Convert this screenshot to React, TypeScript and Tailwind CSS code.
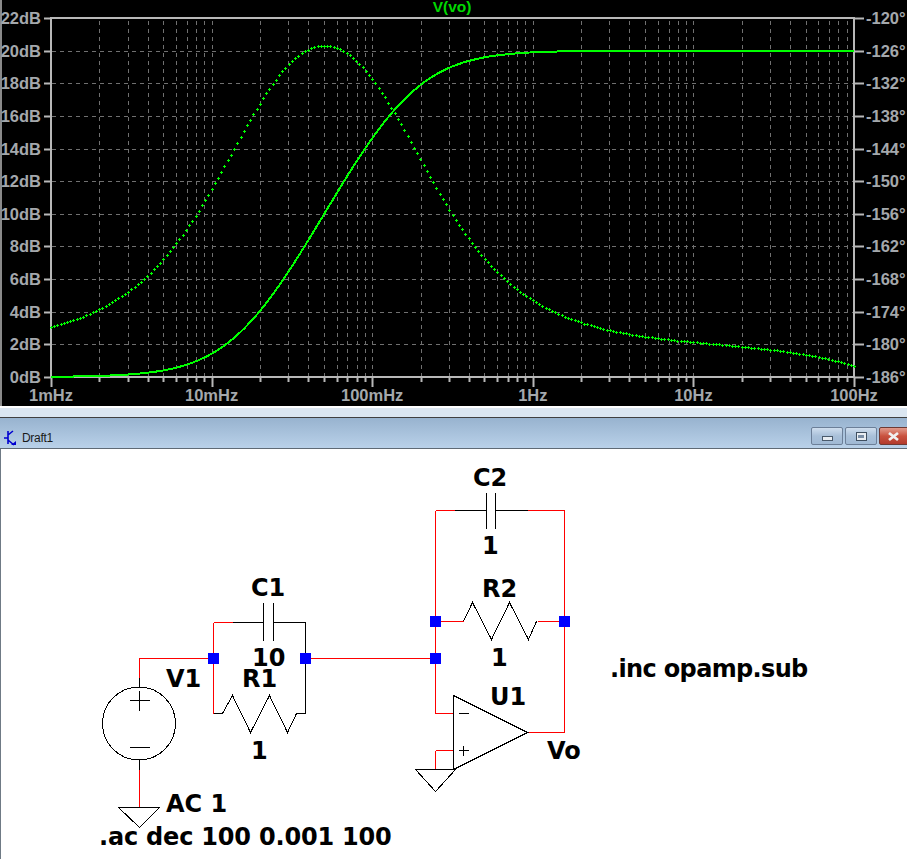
const X0 = 51;
const DEC = 160.6;
const Y0 = 377;
const DB = 16.32;
const DEG = 5.44;

const fx = (f: number) => X0 + (Math.log10(f) + 3) * DEC;

function curves() {
  const mag: string[] = [];
  let dots = "";
  for (let i = 0; i <= 500; i++) {
    const f = Math.pow(10, -3 + i / 100);
    const w = 2 * Math.PI * f;
    const m = 10 * Math.log10((1 + 100 * w * w) / (1 + w * w));
    const p = Math.atan(10 * w) - Math.atan(w) - Math.atan(f / 1400);
    const x = fx(f);
    mag.push(`${x.toFixed(1)},${(Y0 - m * DB).toFixed(1)}`);
    if (i % 2 === 0) {
      const deg = (p * 180) / Math.PI + 6;
      const yy = Math.round(Y0 - deg * DEG);
      const xx = Math.round(x);
      dots += `M${xx - 1} ${yy + 0.5}h3M${xx + 0.5} ${yy - 1}v3`;
    }
  }
  return { mag: mag.join(" "), dots };
}

function Plot() {
  const { mag, dots } = curves();
  const dbs = [0, 2, 4, 6, 8, 10, 12, 14, 16, 18, 20, 22];
  const decs = [0, 1, 2, 3, 4, 5];
  const fLabels = ["1mHz", "10mHz", "100mHz", "1Hz", "10Hz", "100Hz"];
  const vLines: { x: number; major: boolean }[] = [];
  for (let d = 0; d < 5; d++) {
    for (let k = 1; k < 10; k++) {
      vLines.push({ x: Math.round(X0 + (d + Math.log10(k)) * DEC), major: k === 1 });
    }
  }
  vLines.push({ x: 854, major: true });
  return (
    <svg width="907" height="406" className="block font-['Liberation_Sans',Arial,sans-serif]">
      <text x="452" y="12" textAnchor="middle" fontSize="15.5" fontWeight="700" fill="#00d800">V(vo)</text>
      {dbs.map((d) => {
        const y = Math.round(Y0 - d * DB);
        return (
          <g key={d}>
            {d !== 0 && d !== 22 && <line x1="52" x2="854" y1={y + 0.5} y2={y + 0.5} stroke="#707070" strokeDasharray="4 4" />}
            <rect x="44" y={y - 0.5} width="8" height="2" fill="#b8b8b8" />
            <text x="41" y={y + 6} textAnchor="end" fontSize="16.5" fontWeight="700" fill="#a4a8ac">{d}dB</text>
            <rect x="854" y={y - 0.5} width="10" height="2" fill="#b8b8b8" />
            <text x="866" y={y + 6} fontSize="16.5" fontWeight="700" fill="#a4a8ac">{-186 + (d / 2) * 6}°</text>
          </g>
        );
      })}
      {vLines.map((l, i) => (
        <g key={i}>
          <line x1={l.x + 0.5} x2={l.x + 0.5} y1="21" y2="377" stroke="#707070" strokeDasharray="4 4" />
          <rect x={l.x - 0.5} y="377" width="2" height={l.major ? 10 : 5} fill="#b8b8b8" />
        </g>
      ))}
      <rect x="51" y="18" width="803" height="359" fill="none" stroke="#b8b8b8" strokeWidth="2" />
      {decs.map((d) => (
        <text key={d} x={X0 + d * DEC} y="401" textAnchor="middle" fontSize="16.5" fontWeight="700" fill="#a4a8ac">{fLabels[d]}</text>
      ))}
      <path d={dots} stroke="#00ff00" strokeWidth="1" fill="none" shapeRendering="crispEdges" />
      <polyline points={mag} fill="none" stroke="#00ff00" strokeWidth="2" shapeRendering="crispEdges" />
    </svg>
  );
}

function TitleButton({ kind }: { kind: "min" | "max" | "close" }) {
  if (kind === "close") {
    return (
      <div className="w-[34px] h-[18px] rounded-[2px] border border-[#6e3a34] bg-gradient-to-b from-[#e09a8c] via-[#c9523f] to-[#b23a2c] flex items-center justify-start pl-[7px]">
        <svg width="13" height="11" viewBox="0 0 13 11"><path d="M2 2L11 9M11 2L2 9" stroke="#f0f0f0" strokeWidth="2.8" /></svg>
      </div>
    );
  }
  return (
    <div className="w-[32px] h-[18px] rounded-[2px] border border-[#6c7f98] bg-gradient-to-b from-[#cfdeee] via-[#a9c0d9] to-[#a0b9d4] flex items-center justify-center">
      {kind === "min" ? (
        <div className="w-[11px] h-[5px] mt-[5px] bg-[#e8edf2] border border-[#4a5a6c]" />
      ) : (
        <div className="w-[11px] h-[9px] bg-[#e8edf2] border border-[#3f4f60] flex items-center justify-center"><div className="w-[6px] h-[3px] bg-[#7a8ea6]" /></div>
      )}
    </div>
  );
}

function Schematic() {
  const red =
    "M139 677V658H213M213 622V713M305 658H435M213 622H232M139 769V807" +
    "M435 510V713H453M435 510H454M527 510H564V732H527M435 750H453M435 750V769M435 621H463M537 621H564";
  const black =
    "M232 622H263M273 622H305V713M263 602V640M273 602V640M213 713H222L232 695L250 732L269 695L287 732L296 713H305" +
    "M139 677V687M139 759V769M118 807H159L139 827ZM129 700H149M139 690V710M129 747H149" +
    "M454 510H486M495 510H527M486 492V528M495 492V528M463 621L472 602L491 639L509 602L528 639L536 621" +
    "M453 695V769L527 732ZM458 713H468M458 750H468M463 745V755M415 769H455L435 791Z";
  return (
    <svg className="absolute -left-px top-0" width="907" height="410" viewBox="0 449 907 410">
      <g transform="translate(0.5 0.5)" shapeRendering="crispEdges">
        <path d={red} stroke="#ff0000" fill="none" />
        <path d={black} stroke="#000000" fill="none" />
        <circle cx="138.5" cy="723" r="36.5" stroke="#000000" fill="none" />
      </g>
      {[[213, 658], [305, 658], [435, 621], [435, 658], [564, 621]].map(([x, y]) => (
        <rect key={`${x}-${y}`} x={x - 5} y={y - 5} width="11" height="11" fill="#0000ff" />
      ))}
    </svg>
  );
}

const labels: [string, number, number, string][] = [
  ["C2", 473, 464, ""],
  ["1", 482, 532, ""],
  ["C1", 251, 574, ""],
  ["R2", 482, 575, ""],
  ["10", 252, 644, ""],
  ["1", 491, 644, ""],
  [".inc opamp.sub", 610, 655, "tracking-[-0.65px]"],
  ["V1", 166, 665, ""],
  ["R1", 242, 665, ""],
  ["U1", 490, 683, ""],
  ["1", 251, 737, ""],
  ["Vo", 547, 737, ""],
  ["AC 1", 166, 790, ""],
  [".ac dec 100 0.001 100", 99, 823, "tracking-[-0.2px]"],
];

export default function App() {
  return (
    <div className="w-[907px] h-[859px] overflow-hidden bg-white flex flex-col">
      <div className="h-[406px] bg-black border-l-2 border-l-[#8a8a8a] shrink-0">
        <div className="-ml-[2px]"><Plot /></div>
      </div>
      <div className="h-[2px] bg-white shrink-0" />
      <div className="h-[9px] bg-[#dbe6f1] shrink-0" />
      <div className="h-[1px] bg-[#404040] shrink-0" />
      <div className="h-[30px] shrink-0 bg-gradient-to-b from-[#98b3cf] to-[#b9d1e9] flex items-center pt-[9px] pl-[4px]">
        <svg width="12" height="16" viewBox="0 0 12 16" className="mr-[6px]">
          <path d="M4 1V14M0 8H4M4 5L9 1M4 10L10 15" stroke="#0000d0" strokeWidth="1.6" fill="none" />
          <path d="M7 15H12V11Z" fill="#0000d0" />
        </svg>
        <span className="text-[12px] tracking-[-0.3px] text-[#1a1a1a] font-['Liberation_Sans',Arial,sans-serif]">Draft1</span>
        <div className="ml-auto self-start flex gap-[2px] mr-[-6px]">
          <TitleButton kind="min" />
          <TitleButton kind="max" />
          <TitleButton kind="close" />
        </div>
      </div>
      <div className="h-[1px] bg-[#5f6a75] shrink-0" />
      <div className="relative flex-1 bg-white border-l border-l-[#6f7a85]">
        <Schematic />
        {labels.map(([t, x, y, c]) => (
          <span
            key={`${t}-${x}-${y}`}
            className={`absolute whitespace-pre text-[24px] leading-[28px] font-bold text-black font-['DejaVu_Sans',sans-serif] ${c}`}
            style={{ left: x - 1, top: y - 449 }}
          >
            {t}
          </span>
        ))}
      </div>
    </div>
  );
}
